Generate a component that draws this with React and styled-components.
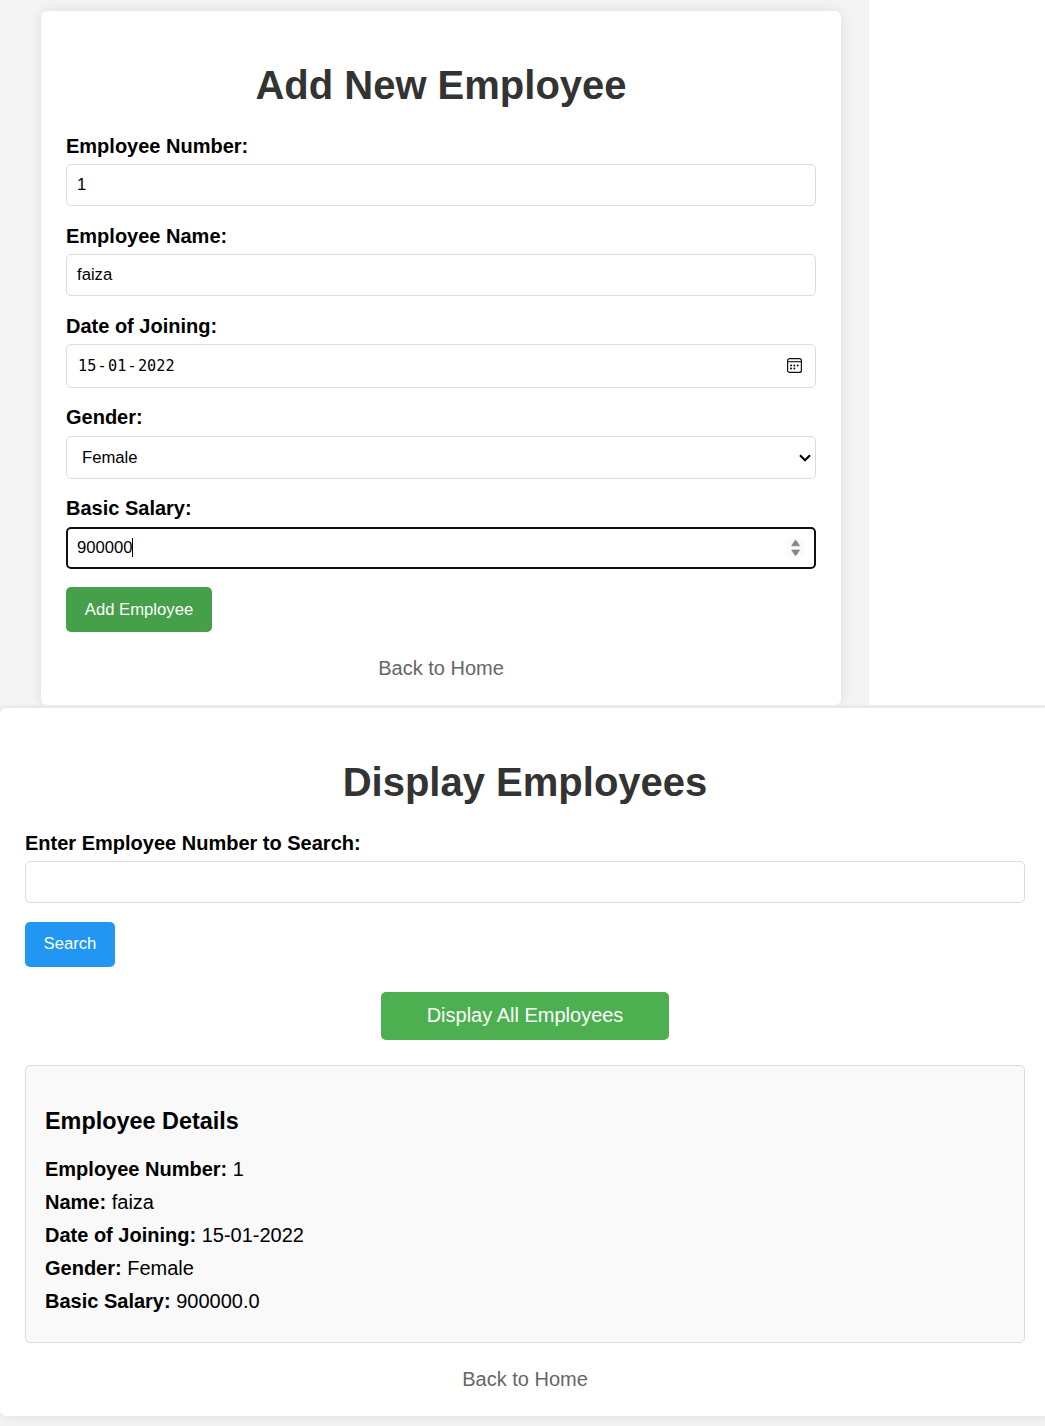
import React from "react";
import styled, { createGlobalStyle } from "styled-components";

const GlobalStyle = createGlobalStyle`
  *, *::before, *::after { box-sizing: border-box; }
  body {
    margin: 0;
    background: #fff;
    color: #000;
    font-family: Arial, "Liberation Sans", sans-serif;
    font-size: 20px;
    line-height: 23px;
  }
`;

const Page = styled.main`
  display: flex;
  flex-direction: column;
  width: 100%;
  height: 1426px;
  overflow: hidden;
`;

const Panel = styled.section`
  flex: none;
  width: ${(p) => p.$width};
  height: ${(p) => p.$height}px;
  padding: ${(p) => p.$padding};
  background: #f4f4f4;
  overflow: hidden;
`;

const Card = styled.div`
  display: flex;
  flex-direction: column;
  width: ${(p) => p.$width}px;
  height: ${(p) => p.$height}px;
  padding: 51px 25px 0;
  background: #fff;
  border-radius: 6px;
  box-shadow: 0 0 12.5px rgba(0, 0, 0, 0.1);
`;

const Title = styled.h1`
  margin: 0 0 27px;
  font-size: 40px;
  line-height: 46px;
  font-weight: 700;
  color: #333;
  text-align: center;
`;

const Field = styled.div`
  display: flex;
  flex-direction: column;
  gap: ${(p) => p.$gap || 6}px;
  margin-bottom: ${(p) => p.$after || 19}px;
`;

const Label = styled.label`
  font-weight: 700;
`;

const Control = styled.div`
  display: flex;
  align-items: center;
  height: ${(p) => p.$height || 42}px;
  padding: 0 ${(p) => p.$end || 10}px 0 ${(p) => p.$start || 10}px;
  border: 1px solid #ddd;
  border-radius: 5px;
  background: #fff;
  font-size: 16.67px;
  line-height: 20px;
  ${(p) => p.$focused && "border: 2px solid #101010; padding-left: 9px;"}
`;

const Value = styled.span`
  flex: 1;
  display: flex;
  align-items: center;
`;

const DateValue = styled(Value)`
  font-family: "DejaVu Sans Mono", monospace;
  font-size: 15.2px;
`;

const Dash = styled.span`
  width: 11.7px;
  text-align: center;
`;

const Caret = styled.span`
  width: 1px;
  height: 19px;
  margin: 0 0 1px -0.7px;
  background: #000;
`;

const Button = styled.button`
  align-self: ${(p) => (p.$center ? "center" : "flex-start")};
  width: ${(p) => p.$width}px;
  height: ${(p) => p.$height || 45}px;
  margin: 0 0 25px;
  padding: 0 0 ${(p) => p.$lift || 0}px;
  border: 0;
  border-radius: 5px;
  background: ${(p) => p.$color};
  color: #fff;
  font-family: inherit;
  font-size: ${(p) => p.$size || 16.67}px;
  line-height: 23px;
`;

const HomeLink = styled.a`
  align-self: center;
  color: #666;
  text-decoration: none;
`;

const Details = styled.div`
  height: 278px;
  margin-bottom: 25px;
  padding: 42px 19px 0;
  border: 1px solid #ddd;
  border-radius: 5px;
  background: #f9f9f9;
`;

const DetailsTitle = styled.h3`
  margin: 0 0 18px;
  font-size: 23.4px;
  line-height: 27px;
`;

const DetailLine = styled.p`
  margin: 0;
  line-height: 33px;
`;

const CalendarSvg = styled.svg`
  margin-bottom: 1px;
`;

const CalendarIcon = () => (
  <CalendarSvg width="15" height="15" viewBox="0 0 15 15" fill="none" stroke="#111">
    <rect x="0.6" y="0.6" width="13.8" height="13.8" rx="2" strokeWidth="1.2" />
    <path d="M1 3.7h13" strokeWidth="1.1" />
    <path
      d="M4 7.5h.01M7.3 7.5h.01M10.7 7.5h.01M4 10.6h.01M7.3 10.6h.01"
      strokeWidth="2"
      strokeLinecap="round"
    />
  </CalendarSvg>
);

const ChevronIcon = () => (
  <svg width="12" height="8" viewBox="0 0 12 8" fill="none" stroke="#000" strokeWidth="2.1">
    <path d="M1 1.3 6 6.2 11 1.3" />
  </svg>
);

const SpinnerIcon = () => (
  <svg width="18" height="20" viewBox="0 0 18 20">
    <path fill="#fafafa" d="M1 0h17v20H1z" />
    <path
      d="M5.6 7.8 8.9 2.7q.7-.8 1.4 0l3.3 5.1zM5.6 12h8l-3.3 5.1q-.7.8-1.4 0z"
      fill="#858585"
      stroke="#858585"
      strokeWidth=".7"
      strokeLinejoin="round"
    />
  </svg>
);

const details = [
  ["Employee Number:", "1"],
  ["Name:", "faiza"],
  ["Date of Joining:", "15-01-2022"],
  ["Gender:", "Female"],
  ["Basic Salary:", "900000.0"],
];

export default function App() {
  return (
    <Page>
      <GlobalStyle />
      <Panel $width="869px" $height={705} $padding="11px 0 0 41px">
        <Card $width={800} $height={694}>
          <Title>Add New Employee</Title>
          <Field>
            <Label>Employee Number:</Label>
            <Control><Value>1</Value></Control>
          </Field>
          <Field>
            <Label>Employee Name:</Label>
            <Control><Value>faiza</Value></Control>
          </Field>
          <Field $after={18}>
            <Label>Date of Joining:</Label>
            <Control $height={44} $start={11} $end={13}>
              <DateValue>
                15<Dash>-</Dash>01<Dash>-</Dash>2022
              </DateValue>
              <CalendarIcon />
            </Control>
          </Field>
          <Field $gap={7} $after={18}>
            <Label>Gender:</Label>
            <Control $height={43} $start={15} $end={4}>
              <Value>Female</Value>
              <ChevronIcon />
            </Control>
          </Field>
          <Field $gap={7} $after={18}>
            <Label>Basic Salary:</Label>
            <Control $focused>
              <Value>900000<Caret /></Value>
              <SpinnerIcon />
            </Control>
          </Field>
          <Button $width={146} $color="#45a049">Add Employee</Button>
          <HomeLink>Back to Home</HomeLink>
        </Card>
      </Panel>
      <Panel $width="100%" $height={721} $padding="3px 0 0">
        <Card $width={1050} $height={708}>
          <Title>Display Employees</Title>
          <Field>
            <Label>Enter Employee Number to Search:</Label>
            <Control />
          </Field>
          <Button $width={90} $color="#2196f3" $lift={2}>Search</Button>
          <Button $center $width={288} $height={48} $size={20} $lift={1} $color="#4caf50">
            Display All Employees
          </Button>
          <Details>
            <DetailsTitle>Employee Details</DetailsTitle>
            {details.map(([name, value]) => (
              <DetailLine key={name}>
                <strong>{name}</strong> {value}
              </DetailLine>
            ))}
          </Details>
          <HomeLink>Back to Home</HomeLink>
        </Card>
      </Panel>
    </Page>
  );
}
